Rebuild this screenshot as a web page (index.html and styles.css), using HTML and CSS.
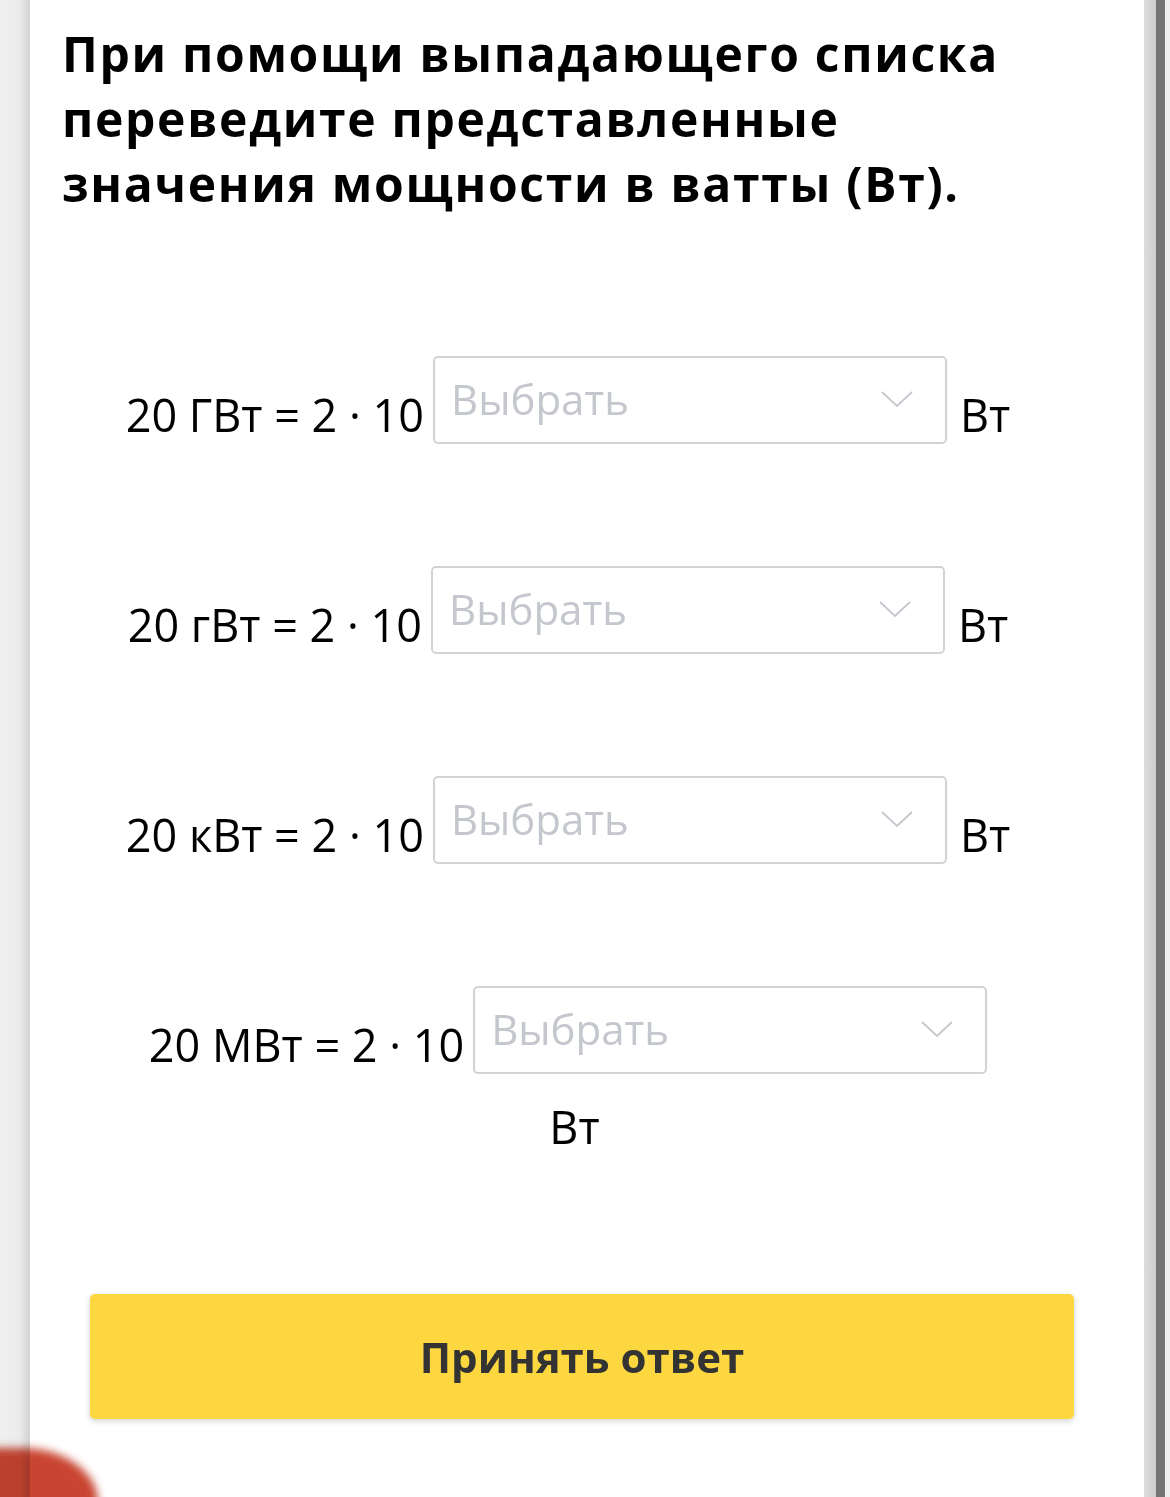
FILE: index.html
```html
<!DOCTYPE html>
<html lang="ru">
<head>
<meta charset="utf-8">
<title>Перевод единиц мощности</title>
<link rel="stylesheet" href="styles.css">
</head>
<body>
<div class="page">
  <div class="gutter-left"></div>
  <main class="card">
    <h1 class="title">При помощи выпадающего списка переведите представленные значения мощности в ватты (Вт).</h1>
    <div class="tasks">
      <div class="task">
        <span class="expr">20 ГВт = 2 · 10</span>
        <div class="select">
          <span class="placeholder">Выбрать</span>
          <svg class="chevron" width="32" height="16" viewBox="0 0 32 16"><path d="M1 1 L16 15 L31 1" fill="none" stroke="#c4c7cd" stroke-width="1.8"/></svg>
        </div>
        <span class="unit">Вт</span>
      </div>
      <div class="task">
        <span class="expr">20 гВт = 2 · 10</span>
        <div class="select">
          <span class="placeholder">Выбрать</span>
          <svg class="chevron" width="32" height="16" viewBox="0 0 32 16"><path d="M1 1 L16 15 L31 1" fill="none" stroke="#c4c7cd" stroke-width="1.8"/></svg>
        </div>
        <span class="unit">Вт</span>
      </div>
      <div class="task">
        <span class="expr">20 кВт = 2 · 10</span>
        <div class="select">
          <span class="placeholder">Выбрать</span>
          <svg class="chevron" width="32" height="16" viewBox="0 0 32 16"><path d="M1 1 L16 15 L31 1" fill="none" stroke="#c4c7cd" stroke-width="1.8"/></svg>
        </div>
        <span class="unit">Вт</span>
      </div>
      <div class="task">
        <span class="expr">20 МВт = 2 · 10</span>
        <div class="select">
          <span class="placeholder">Выбрать</span>
          <svg class="chevron" width="32" height="16" viewBox="0 0 32 16"><path d="M1 1 L16 15 L31 1" fill="none" stroke="#c4c7cd" stroke-width="1.8"/></svg>
        </div>
        <span class="unit">Вт</span>
      </div>
    </div>
    <button class="submit" type="button">Принять ответ</button>
  </main>
  <div class="gutter-right">
    <div class="edge"></div>
    <div class="scroll"></div>
    <div class="rest"></div>
  </div>
</div>
<div class="finger"></div>
</body>
</html>
```
FILE: styles.css
```css
html, body {
  margin: 0;
  padding: 0;
  height: 100%;
  overflow: hidden;
}

body {
  font-family: "Open Sans", "Noto Sans", sans-serif;
  color: #000;
  background: #efefef;
  position: relative;
}

.page {
  display: flex;
  min-height: 100vh;
}

.gutter-left {
  width: 30px;
  flex: none;
  background: linear-gradient(to right, #efefef 0, #ececec 19px, #d2d2d2 30px);
}

.gutter-right {
  width: 30px;
  flex: none;
  display: flex;
}

.gutter-right .edge {
  width: 12px;
  flex: none;
  background: linear-gradient(to right, #dcdcdc, #cdcdcd);
}

.gutter-right .scroll {
  width: 9px;
  flex: none;
  background: #747474;
}

.gutter-right .rest {
  width: 9px;
  flex: none;
  background: #efefef;
}

.card {
  flex: 1;
  background: #fff;
  padding: 21px 70px 0 32px;
}

.title {
  margin: 0;
  font-size: 48px;
  line-height: 65px;
  font-weight: 700;
  letter-spacing: 1.7px;
}

.tasks {
  margin: 140px 59px 0;
}

.task {
  display: flex;
  flex-wrap: wrap;
  justify-content: center;
  align-items: flex-end;
  row-gap: 23px;
  margin-bottom: 122px;
}

.task:last-child {
  margin-bottom: 0;
}

.expr,
.unit {
  font-size: 45px;
  line-height: 59px;
  white-space: nowrap;
}

.select {
  box-sizing: border-box;
  width: 514px;
  height: 88px;
  margin-left: 9px;
  border: 2px solid #d3d3d3;
  border-radius: 5px;
  display: flex;
  justify-content: space-between;
  align-items: flex-start;
  padding: 12px 32px 0 16px;
}

.placeholder {
  font-size: 42px;
  line-height: 58px;
  color: #c4c7cd;
}

.chevron {
  margin-top: 21px;
}

.unit {
  margin-left: 13px;
}

.submit {
  display: block;
  box-sizing: border-box;
  width: 984px;
  height: 125px;
  margin: 138px 0 0 28px;
  border: none;
  border-radius: 5px;
  background: #fdd73f;
  box-shadow: 0 2px 6px rgba(0, 0, 0, 0.18);
  font-family: "Open Sans", "Noto Sans", sans-serif;
  font-size: 42px;
  font-weight: 700;
  color: #333;
  padding: 0;
}

/* blurred red shape at the lower-left corner */
.finger {
  position: absolute;
  left: -40px;
  top: 1448px;
  width: 138px;
  height: 120px;
  border-radius: 20% 55% 0 0 / 10% 45% 0 0;
  background: #c94531;
  mix-blend-mode: multiply;
  filter: blur(4px);
}
```
